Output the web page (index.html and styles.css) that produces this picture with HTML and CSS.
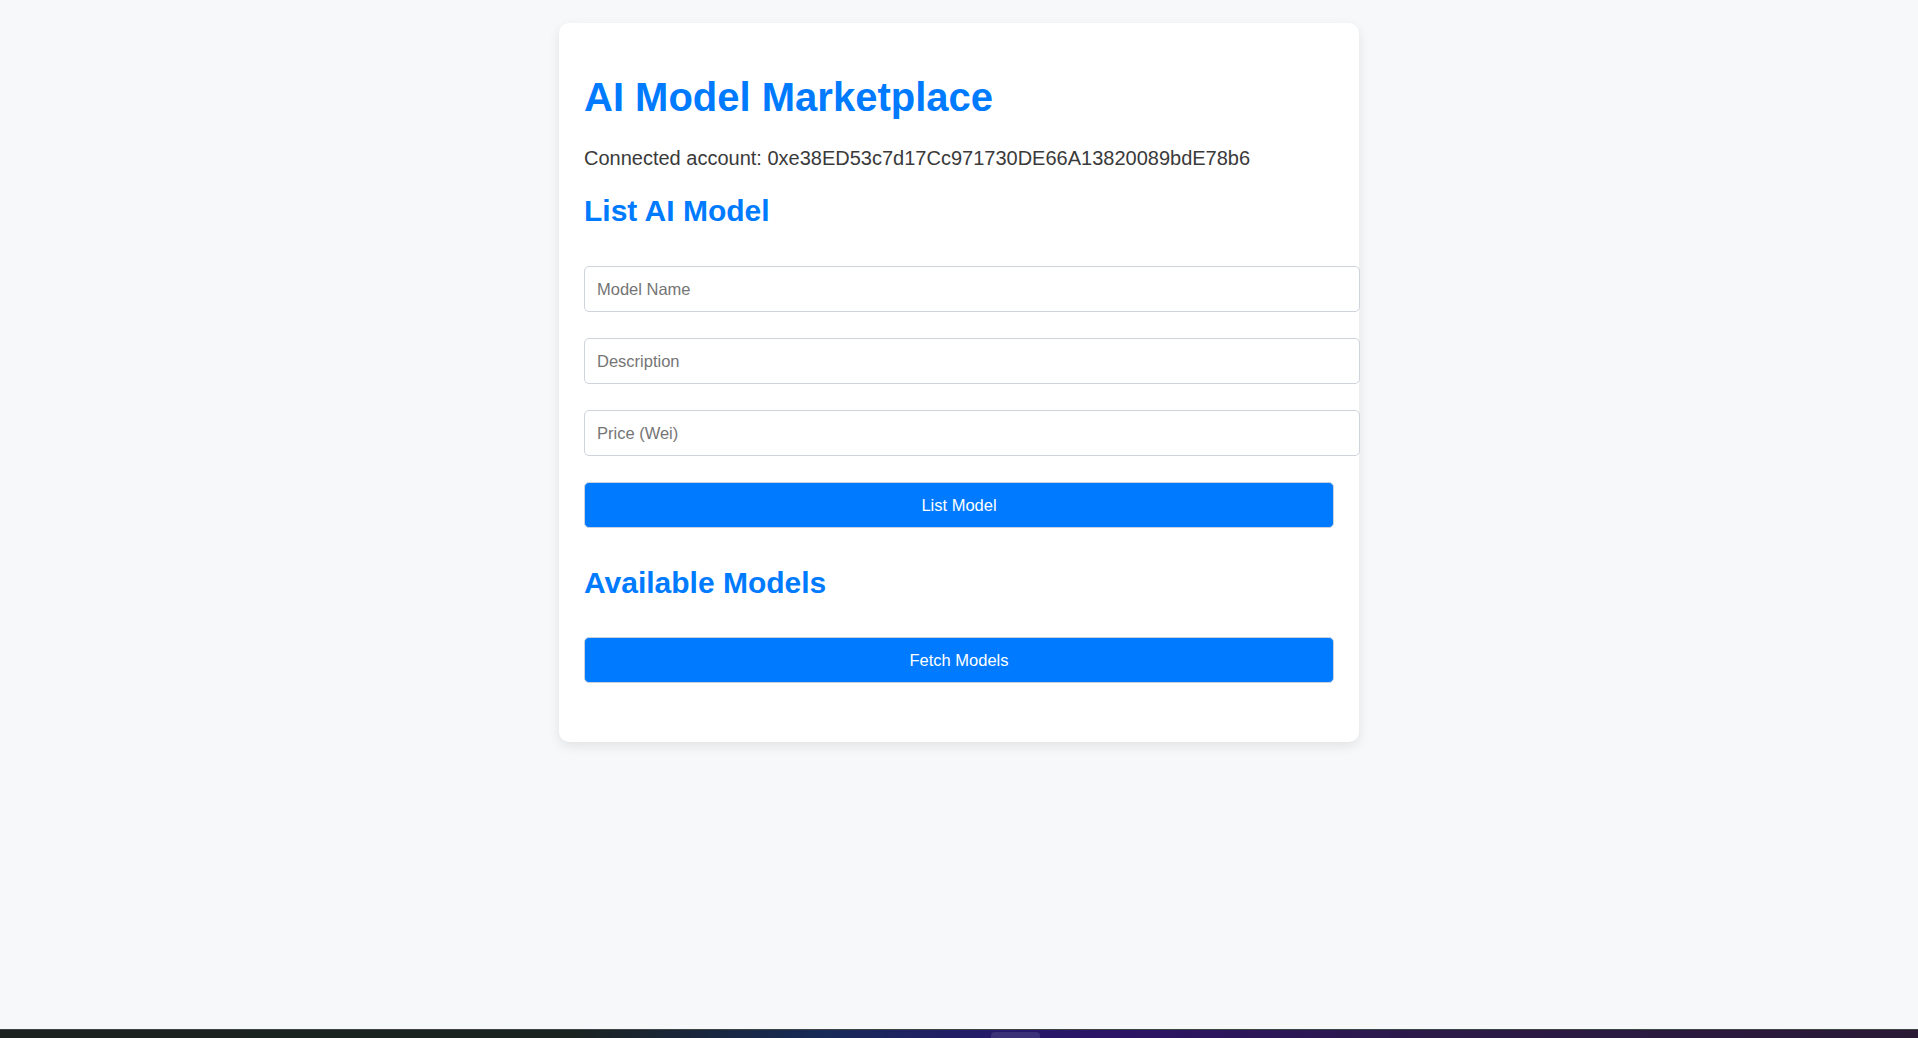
FILE: index.html
```html
<!DOCTYPE html>
<html lang="en">
<head>
<meta charset="utf-8">
<title>AI Model Marketplace</title>
<link rel="stylesheet" href="styles.css">
</head>
<body>
<main class="page">
  <div class="card">
    <h1 class="title">AI Model Marketplace</h1>
    <p class="account">Connected account: 0xe38ED53c7d17Cc971730DE66A13820089bdE78b6</p>
    <h2 class="section">List AI Model</h2>
    <div class="form">
      <input class="field" type="text" placeholder="Model Name">
      <input class="field" type="text" placeholder="Description">
      <input class="field" type="text" placeholder="Price (Wei)">
      <button class="btn">List Model</button>
    </div>
    <h2 class="section section-models">Available Models</h2>
    <button class="btn">Fetch Models</button>
    <div class="models"></div>
  </div>
</main>
<div class="taskbar"><span class="taskbar-tab"></span></div>
</body>
</html>
```
FILE: styles.css
```css
html, body {
  height: 100%;
}
body {
  margin: 0;
  background: #f7f8fa;
  font-family: "Liberation Sans", Arial, sans-serif;
  color: #333;
  display: flex;
  flex-direction: column;
}
.page {
  flex: 1;
  display: flex;
  justify-content: center;
  align-items: flex-start;
  padding-top: 23px;
}
.card {
  width: 800px;
  box-sizing: border-box;
  background: #fff;
  border-radius: 10px;
  box-shadow: 0 4px 12px rgba(0, 0, 0, 0.09);
  padding: 51px 25px 33px;
}
.title {
  margin: 0 0 27px;
  font-size: 40px;
  line-height: 46px;
  font-weight: bold;
  color: #007bff;
}
.account {
  margin: 0 0 24px;
  font-size: 20px;
  line-height: 23px;
  color: #3a3a3a;
}
.section {
  margin: 0 0 38px;
  font-size: 30px;
  line-height: 34px;
  font-weight: bold;
  color: #007bff;
}
.section-models {
  margin-top: 38px;
  margin-bottom: 37px;
}
.form {
  display: flex;
  flex-direction: column;
  gap: 26px;
}
.field {
  display: block;
  width: 100%;
  box-sizing: content-box;
  margin: 0;
  padding: 12px;
  height: 20px;
  border: 1px solid #cfd4dc;
  border-radius: 5px;
  background: #fff;
  font-family: "Liberation Sans", Arial, sans-serif;
  font-size: 16.5px;
  color: #333;
  outline: none;
}
.field::placeholder {
  color: #757575;
}
.btn {
  display: block;
  width: 100%;
  box-sizing: border-box;
  height: 46px;
  margin: 0;
  padding: 12px;
  border: 1px solid #c9d3e0;
  border-radius: 5px;
  background: #007bff;
  color: #fff;
  font-family: "Liberation Sans", Arial, sans-serif;
  font-size: 16.5px;
  cursor: pointer;
}
.models {
  height: 26px;
}
.taskbar {
  height: 9px;
  flex: none;
  border-top: 1px solid #3c4342;
  box-sizing: border-box;
  background: linear-gradient(90deg, #1b2220 0%, #1b2321 30%, #172a58 43%, #251a6a 52%, #2c1466 58%, #2c1a48 75%, #2a1a36 100%);
  display: flex;
  justify-content: center;
}
.taskbar-tab {
  width: 49px;
  height: 8px;
  margin-top: 2px;
  margin-left: 112px;
  border-radius: 4px 4px 0 0;
  background: #3a3178;
}
```
